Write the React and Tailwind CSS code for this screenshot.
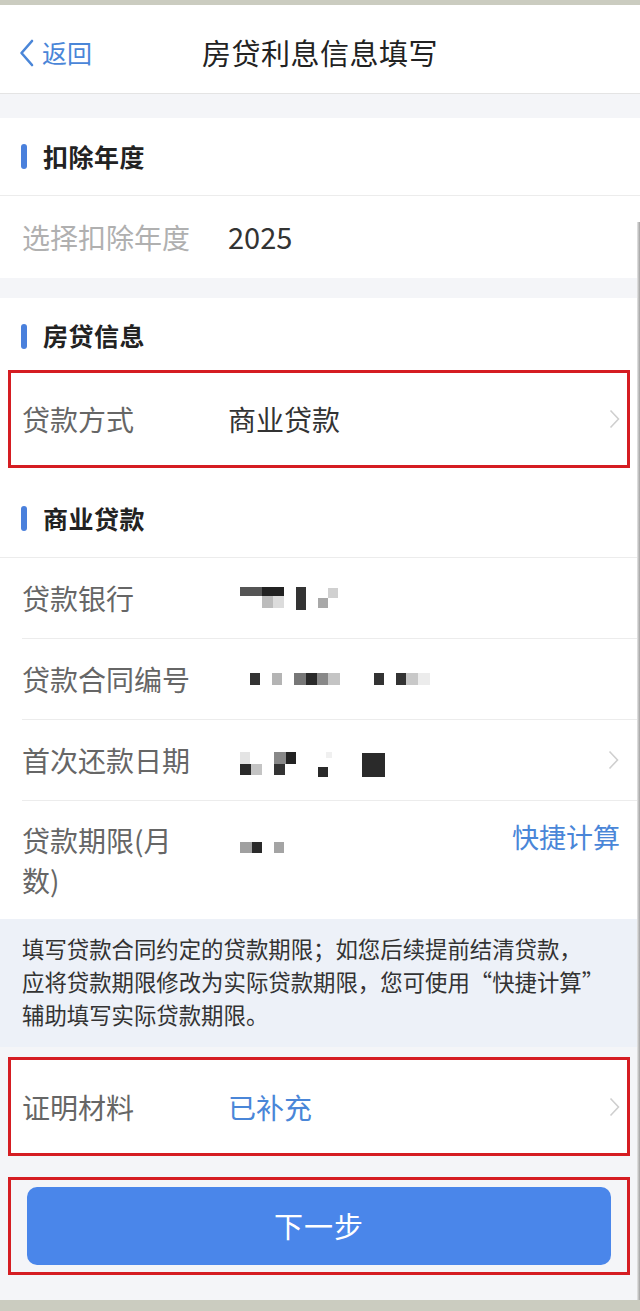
import React from "react";

const font = { fontFamily: '"Noto Sans CJK SC", "Noto Sans", sans-serif' };

const Chevron = () => (
  <svg width="11" height="20" viewBox="0 0 11 20" className="shrink-0">
    <path d="M1.5 1.5 L9.5 10 L1.5 18.5" fill="none" stroke="#cfcfcf" strokeWidth="1.6" />
  </svg>
);

const SectionHeader = ({ title, className = "" }) => (
  <div className={`flex items-center bg-white px-[21px] ${className}`}>
    <span className="w-[6px] h-[25px] rounded-full bg-[#4a80dc] mr-[16px]" />
    <span className="text-[25px] font-bold text-[#222] tracking-[0.5px]">{title}</span>
  </div>
);

const Row = ({ label, children, right, className = "", pad = "pl-[22px] pr-[22px]", labelW = "w-[206px]", labelClass = "text-[#666]" }) => (
  <div className={`flex items-center bg-white ${pad} ${className}`}>
    <div className={`${labelW} shrink-0 text-[28px] leading-[40px] ${labelClass}`}>{label}</div>
    <div className="flex-1 flex items-center">{children}</div>
    {right}
  </div>
);

const Blocks = ({ w, h, rects }) => (
  <svg width={w} height={h}>
    {rects.map(([x, y, rw, rh, c], i) => (
      <rect key={i} x={x} y={y} width={rw} height={rh} fill={c} />
    ))}
  </svg>
);

export default function App() {
  return (
    <div className="relative w-[640px] min-h-[1311px] bg-[#f4f5f8] flex flex-col" style={font}>
      <div className="h-[5px] bg-[#cbccc0]" />

      {/* nav */}
      <div className="relative h-[89px] bg-white border-b border-[#e4e4e4] flex items-center justify-center pt-[8px]">
        <div className="absolute left-[19px] top-0 h-full pt-[8px] flex items-center text-[#4a86d8]">
          <svg width="15" height="28" viewBox="0 0 15 28" className="mr-[8px]">
            <path d="M13 2 L2.5 14 L13 26" fill="none" stroke="#4a86d8" strokeWidth="2.6" strokeLinecap="round" strokeLinejoin="round" />
          </svg>
          <span className="text-[25px]">返回</span>
        </div>
        <span className="text-[29px] text-[#222] tracking-[0.5px]">房贷利息信息填写</span>
      </div>

      <div className="h-[24px]" />

      {/* 扣除年度 */}
      <SectionHeader title="扣除年度" className="h-[78px] border-b border-[#ececec]" />
      <Row label="选择扣除年度" labelClass="text-[#b0b0b0]" className="h-[82px]">
        <span className="text-[29px] text-[#333]">2025</span>
      </Row>

      <div className="h-[20px]" />

      {/* 房贷信息 */}
      <SectionHeader title="房贷信息" className="h-[72px] pt-[4px]" />
      <div className="bg-white pl-[8px] pr-[10px]">
        <div className="border-[3px] border-[#d51d22] h-[98px] flex">
          <Row label="贷款方式" className="flex-1" pad="pl-[11px] pr-[7px]" labelW="w-[206px]" right={<Chevron />}>
            <span className="text-[28px] text-[#333]">商业贷款</span>
          </Row>
        </div>
      </div>

      {/* 商业贷款 */}
      <SectionHeader title="商业贷款" className="h-[90px] pt-[12px] border-b border-[#ececec]" />
      <div className="bg-white">
        <Row label="贷款银行" className="h-[80px]">
          <div className="ml-[12px]">
            <Blocks
              w={100}
              h={26}
              rects={[
                [0, 2, 22, 9, "#555"],
                [22, 2, 22, 9, "#222"],
                [22, 11, 11, 12, "#bcbcbc"],
                [33, 11, 11, 12, "#dcdcdc"],
                [56, 2, 10, 23, "#333"],
                [78, 13, 10, 10, "#a8a8a8"],
                [88, 3, 10, 10, "#d0d0d0"],
              ]}
            />
          </div>
        </Row>
        <div className="ml-[22px] border-b border-[#ececec]" />
        <Row label="贷款合同编号" className="h-[80px]">
          <div className="ml-[20px]">
            <Blocks
              w={190}
              h={14}
              rects={[
                [2, 1, 10, 12, "#333"],
                [24, 1, 10, 12, "#b4b4b4"],
                [46, 1, 12, 12, "#777"],
                [58, 1, 11, 12, "#2a2a2a"],
                [69, 1, 11, 12, "#888"],
                [80, 1, 12, 12, "#c4c4c4"],
                [126, 1, 10, 12, "#333"],
                [148, 1, 10, 12, "#333"],
                [158, 1, 12, 12, "#c8c8c8"],
                [170, 1, 12, 12, "#ececec"],
              ]}
            />
          </div>
        </Row>
        <div className="ml-[22px] border-b border-[#ececec]" />
        <Row label="首次还款日期" className="h-[80px]" pad="pl-[22px] pr-[21px]" right={<Chevron />}>
          <div className="ml-[12px] mt-[8px]">
            <Blocks
              w={150}
              h={28}
              rects={[
                [0, 2, 10, 12, "#e4e4e4"],
                [0, 14, 11, 11, "#2a2a2a"],
                [11, 14, 11, 11, "#c4c4c4"],
                [34, 2, 12, 12, "#888"],
                [46, 2, 10, 12, "#222"],
                [34, 14, 11, 11, "#333"],
                [78, 17, 10, 10, "#2a2a2a"],
                [86, 2, 6, 6, "#f0f0f0"],
                [122, 3, 23, 24, "#2a2a2a"],
              ]}
            />
          </div>
        </Row>
        <div className="ml-[22px] border-b border-[#ececec]" />
        <Row
          label={
            <span>
              贷款期限(月
              <br />
              数)
            </span>
          }
          className="h-[118px]"
          right={<span className="self-start mt-[16px] text-[27px] text-[#4a86d8] -mr-[2px]">快捷计算</span>}
        >
          <div className="ml-[12px] -mt-[24px]">
            <Blocks
              w={50}
              h={12}
              rects={[
                [0, 0, 12, 11, "#a0a0a0"],
                [12, 0, 10, 11, "#2a2a2a"],
                [34, 0, 10, 11, "#a4a4a4"],
              ]}
            />
          </div>
        </Row>
      </div>

      {/* note */}
      <div className="bg-[#edf1f8] pl-[22px] pr-[10px] pt-[13px] pb-[16px] text-[22.4px] leading-[33px] text-[#333] whitespace-nowrap">
        填写贷款合同约定的贷款期限；如您后续提前结清贷款，
        <br />
        应将贷款期限修改为实际贷款期限，您可使用“快捷计算”
        <br />
        辅助填写实际贷款期限。
      </div>

      <div className="h-[10px]" />

      {/* 证明材料 */}
      <div className="pl-[8px] pr-[10px]">
        <div className="border-[3px] border-[#d51d22] h-[99px] flex bg-white">
          <Row label="证明材料" className="flex-1" pad="pl-[11px] pr-[7px]" right={<Chevron />}>
            <span className="text-[28px] text-[#4a86d8]">已补充</span>
          </Row>
        </div>
      </div>

      <div className="h-[21px]" />

      {/* next */}
      <div className="pl-[8px] pr-[10px]">
        <div className="border-[3px] border-[#d51d22] h-[98px] px-[16px] py-[7px] flex">
          <button className="flex-1 rounded-[10px] bg-[#4a86ea] text-white text-[29px] tracking-[1px] flex items-center justify-center">
            下一步
          </button>
        </div>
      </div>

      <div className="flex-1" />
      <div className="h-[11px] bg-[#cbccc0]" />

      {/* scan edge line */}
      <div className="absolute right-0 top-[222px] bottom-[11px] w-[3px] bg-gradient-to-r from-[#e8e8e8] to-[#a0a0a0]" />
    </div>
  );
}
